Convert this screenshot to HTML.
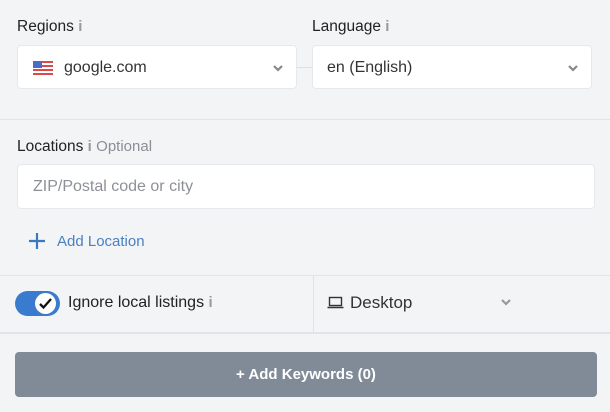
<!DOCTYPE html>
<html><head><meta charset="utf-8"><style>
*{box-sizing:border-box;margin:0;padding:0}
body{width:610px;height:412px;background:#f3f4f6;font-family:"Liberation Sans",sans-serif;position:relative;overflow:hidden;color:#2b2b2b}
.abs{position:absolute}
.lbl{font-size:15.5px;color:#222}
.i{color:#999;font-size:15px;font-weight:bold}
.box{background:#fff;border:1px solid #e6e8eb;border-radius:4px;position:absolute}
.hline{position:absolute;left:0;width:610px;height:1px;background:#e1e3e6}
.chev{position:absolute}
</style></head><body>
<div class="abs lbl" style="left:17px;top:18px">Regions <span class="i">i</span></div>
<div class="abs lbl" style="left:312px;top:18px">Language <span class="i">i</span></div>
<div class="box" style="left:17px;top:45px;width:280px;height:44px">
 <svg class="abs" style="left:15px;top:15px" width="20" height="14" viewBox="0 0 20 14"><rect width="20" height="14" fill="#fff"/><g fill="#d94a4a"><rect y="0" width="20" height="2"/><rect y="4" width="20" height="2"/><rect y="8" width="20" height="2"/><rect y="12" width="20" height="2"/></g><rect width="9" height="7" fill="#4a6bc7"/></svg>
 <div class="abs" style="left:46px;top:13px;font-size:16px;color:#333">google.com</div>
 <svg class="chev" style="left:255px;top:19px" width="10" height="7" viewBox="0 0 10 7"><path d="M1 1l4 4 4-4" stroke="#888" stroke-width="2.2" fill="none"/></svg>
</div>
<div class="abs" style="left:297px;top:67px;width:15px;height:1px;background:#dcdfe3"></div>
<div class="box" style="left:312px;top:45px;width:280px;height:44px">
 <div class="abs" style="left:14px;top:13px;font-size:16px;color:#333">en (English)</div>
 <svg class="chev" style="left:255px;top:19px" width="10" height="7" viewBox="0 0 10 7"><path d="M1 1l4 4 4-4" stroke="#888" stroke-width="2.2" fill="none"/></svg>
</div>
<div class="hline" style="top:119px"></div>
<div class="abs lbl" style="left:17px;top:138px">Locations <span class="i">i</span> <span style="color:#8a8f96;font-size:15px">Optional</span></div>
<div class="box" style="left:17px;top:164px;width:578px;height:45px">
 <div class="abs" style="left:15px;top:13px;font-size:16px;color:#8d9096">ZIP/Postal code or city</div>
</div>
<svg class="abs" style="left:28px;top:232px" width="18" height="18" viewBox="0 0 18 18"><path d="M9 1v16M1 9h16" stroke="#3b78c2" stroke-width="2.2"/></svg>
<div class="abs" style="left:57px;top:233px;font-size:15px;color:#4a80c0">Add Location</div>
<div class="hline" style="top:275px"></div>
<div class="abs" style="left:313px;top:276px;width:1px;height:56px;background:#e1e3e6"></div>
<div class="abs" style="left:15px;top:291px;width:45px;height:25px;border-radius:13px;background:#3a7bd0"></div>
<div class="abs" style="left:35px;top:293px;width:21px;height:21px;border-radius:50%;background:#fff"></div>
<svg class="abs" style="left:38px;top:297px" width="15" height="13" viewBox="0 0 15 13"><path d="M2 7l3.5 3.5L13 2" stroke="#111" stroke-width="2.3" fill="none"/></svg>
<div class="abs" style="left:68px;top:294px;font-size:16px;color:#222">Ignore local listings <span class="i">i</span></div>
<svg class="abs" style="left:327px;top:296px" width="17" height="13" viewBox="0 0 17 13"><rect x="2.5" y="1.5" width="12" height="8" fill="none" stroke="#333" stroke-width="1.4"/><path d="M0.5 11.5h16" stroke="#333" stroke-width="1.5"/></svg>
<div class="abs" style="left:350px;top:293px;font-size:17px;color:#333">Desktop</div>
<svg class="chev" style="left:501px;top:299px" width="10" height="7" viewBox="0 0 10 7"><path d="M1 1l4 4 4-4" stroke="#999" stroke-width="2.2" fill="none"/></svg>
<div class="hline" style="top:332px;height:2px"></div>
<div class="abs" style="left:15px;top:352px;width:582px;height:45px;border-radius:4px;background:#818b97;color:#fff;font-weight:bold;font-size:15px;text-align:center;line-height:45px">+ Add Keywords (0)</div>
</body></html>
